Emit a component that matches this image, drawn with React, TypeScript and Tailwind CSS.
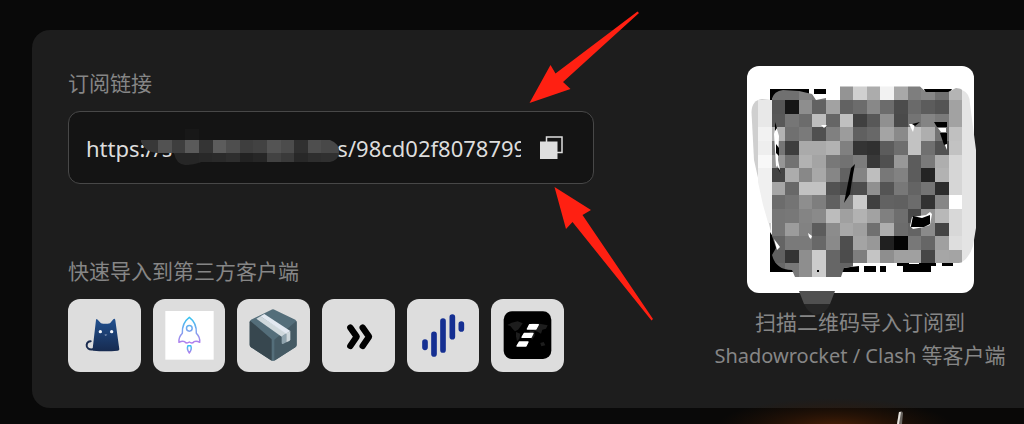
import type { ReactNode } from "react";

const LATIN_CJK =
  "font-['Noto_Sans','Noto_Sans_CJK_SC',sans-serif]";

const SUBSCRIPTION_URL = "https://s" + "\u2002".repeat(15) + "s/98cd02f8078799";

/* Grey levels of the pixelated code, one list per row. */
const CELL = 13.62;
const CODE_ROWS: number[][] = [
  [255, 112, 112, 128, 118, 255, 148, 208, 172, 242, 168, 126, 134, 112, 180],
  [232, 86, 22, 142, 98, 162, 98, 108, 136, 108, 76, 106, 92, 84, 162],
  [232, 88, 118, 108, 190, 102, 192, 64, 88, 144, 74, 116, 132, 122, 162],
  [242, 178, 112, 122, 80, 128, 156, 96, 104, 164, 138, 194, 174, 116, 192],
  [238, 118, 62, 170, 170, 178, 128, 52, 48, 92, 110, 194, 112, 82, 194],
  [248, 150, 114, 178, 164, 120, 114, 124, 56, 80, 152, 92, 122, 174, 214],
  [240, 68, 172, 136, 168, 134, 98, 132, 190, 120, 130, 92, 36, 178, 214],
  [240, 166, 104, 194, 194, 82, 72, 76, 144, 84, 120, 100, 116, 44, 214],
  [240, 108, 116, 142, 126, 96, 128, 202, 64, 98, 96, 108, 50, 134, 255],
  [240, 118, 120, 132, 138, 188, 160, 178, 162, 128, 110, 72, 148, 184, 216],
  [255, 118, 156, 130, 92, 140, 168, 160, 112, 174, 108, 100, 138, 68, 216],
  [255, 100, 122, 122, 104, 138, 78, 164, 152, 32, 4, 120, 102, 160, 222],
  [255, 96, 52, 142, 204, 102, 76, 126, 196, 142, 160, 160, 70, 166, 164],
  [255, 104, 120, 142, 204, 102, 100, 255, 255, 255, 255, 255, 255, 255, 255],
];

const URL_MASK_TOP = [56, 82, 62, 90, 52, 92, 78, 62, 66, 84, 76, 48, 78, 72];
const URL_MASK_BOTTOM = [38, 38, 40, 42, 46, 34, 38, 66, 58, 40, 46, 48];

function grey(level: number) {
  return `rgb(${level},${level},${level})`;
}

function CatIcon() {
  return (
    <svg viewBox="0 0 218 218" className="size-full" aria-hidden="true">
      <defs>
        <linearGradient id="cat" x1="0" y1="0" x2="0" y2="1">
          <stop offset="0" stopColor="#21508f" />
          <stop offset="1" stopColor="#172b50" />
        </linearGradient>
      </defs>
      <path d="M78 150C62 155 55 145 56 138C57 131 62 127 68 127" fill="none" stroke="#1a2c50" strokeWidth="6" strokeLinecap="round" />
      <path d="M84 63Q85 58 89 62L99 73Q112 76 126 73L136 61Q141 57 142 64L154 151Q154 155 149 155Q112 158 76 155Q73 154 74 149Z" fill="url(#cat)" />
      <circle cx="97" cy="98" r="5" fill="#f2f5fa" />
      <circle cx="131" cy="98" r="5" fill="#f2f5fa" />
      <path d="M109 107Q113 105 118 107L113 111Z" fill="#8093b4" />
    </svg>
  );
}

function RocketIcon() {
  return (
    <svg viewBox="0 0 218 218" className="size-full" aria-hidden="true">
      <defs>
        <linearGradient id="rocket" gradientUnits="userSpaceOnUse" x1="0" y1="54" x2="0" y2="134">
          <stop offset="0" stopColor="#35c5f0" />
          <stop offset="0.5" stopColor="#7aa5ee" />
          <stop offset="1" stopColor="#b57ced" />
        </linearGradient>
        <linearGradient id="flame" x1="0" y1="0" x2="0" y2="1">
          <stop offset="0" stopColor="#35c5f0" />
          <stop offset="1" stopColor="#b57ced" />
        </linearGradient>
      </defs>
      <rect x="37" y="36" width="145" height="146" fill="#fff" />
      <g fill="none" strokeWidth="4.5" strokeLinejoin="round">
        <path stroke="url(#rocket)" d="M109 55C94 66 87 83 88 103C80 111 77 121 78 130Q88 125 95 128Q101 135 109 129Q117 135 123 128Q131 125 140 130C141 121 138 111 130 103C131 83 124 66 109 55Z" />
        <circle stroke="url(#rocket)" cx="109" cy="88" r="8.5" />
        <path stroke="url(#flame)" d="M105 140H113Q118 150 109 162Q100 150 105 140Z" />
      </g>
    </svg>
  );
}

function BoxIcon() {
  return (
    <svg viewBox="0 0 218 218" className="size-full" aria-hidden="true">
      <path d="M102 33Q108 29 114 33L175 62Q179 65 179 70V137Q179 142 175 145L114 184Q108 188 102 184L42 145Q38 142 38 137V70Q38 65 42 62Z" fill="#546e7a" />
      <path d="M39 65L104 121V185L42 145Q38 142 38 137V70Z" fill="#37474f" />
      <path d="M112 122L178 66Q179 68 179 71V137Q179 142 175 145L112 185Z" fill="#455a64" />
      <path d="M58 59L70 52L150 103L134 113Z" fill="#cfd8dc" />
      <path d="M70 52L82 45L160 96L148 104Z" fill="#e3e9f1" />
      <path d="M134 112L148 103V130L138 135Q134 136 134 132Z" fill="#90a4ae" />
      <path d="M148 103L160 96V121Q160 124 157 126L148 130Z" fill="#cfd8dc" />
    </svg>
  );
}

function ChevronsIcon() {
  return (
    <svg viewBox="0 0 218 218" className="size-full" aria-hidden="true">
      <g fill="none" stroke="#000" strokeWidth="19" strokeLinecap="round" strokeLinejoin="round">
        <path d="M85 86L104 113L85 141" />
        <path d="M122 86L141 113L122 141" />
      </g>
    </svg>
  );
}

function BarsIcon() {
  return (
    <svg viewBox="0 0 218 218" className="size-full" aria-hidden="true">
      <g stroke="#152f92" strokeWidth="17" strokeLinecap="round">
        <path d="M54 129V145M81 106V165M108 66V153M136 54V113M163 75V90" />
      </g>
    </svg>
  );
}

function StripesIcon() {
  return (
    <svg viewBox="0 0 218 218" className="size-full" aria-hidden="true">
      <rect x="38" y="37" width="143" height="143" rx="25" fill="#000" />
      <g fill="#1d1d1d">
        <path d="M49 78L62 71L80 67L95 73L88 83L81 92L72 97L66 91L58 81Z" />
        <path d="M75 99L88 104L85 119L78 127L75 112Z" />
        <path d="M111 78L125 72L146 74L170 79L165 89L154 92L150 104L140 98L130 95L115 90Z" />
        <path d="M116 94L130 96L131 110L123 122L116 107Z" />
        <path d="M148 132L158 129L163 139L151 142Z" />
      </g>
      <g fill="#fff" stroke="#fff" strokeWidth="4" strokeLinejoin="round">
        <path d="M116 77H142L135 90H109Z" />
        <path d="M100 103H126L120 115H93Z" />
        <path d="M85 129H111L105 141H78Z" />
      </g>
    </svg>
  );
}

const CLIENTS: { name: string; icon: ReactNode }[] = [
  { name: "Clash", icon: <CatIcon /> },
  { name: "Shadowrocket", icon: <RocketIcon /> },
  { name: "Box", icon: <BoxIcon /> },
  { name: "Chevrons", icon: <ChevronsIcon /> },
  { name: "Bars", icon: <BarsIcon /> },
  { name: "Stripes", icon: <StripesIcon /> },
];

function UrlMask() {
  return (
    <svg
      viewBox="140 128 202 40"
      className="pointer-events-none absolute left-[70px] top-[15px] h-[40px] w-[202px]"
      aria-hidden="true"
    >
      <defs>
        <clipPath id="url-mask">
          <path d="M142 141H331Q340 144 340 153Q340 161 331 163H202Q195 166 186 166Q177 165 175 154H158Q146 153 142 143Z" />
        </clipPath>
      </defs>
      <rect x="186" y="130" width="14" height="11" fill="#181818" />
      <g clipPath="url(#url-mask)" shapeRendering="crispEdges">
        {URL_MASK_TOP.map((level, i) => (
          <rect key={i} x={145.4 + i * CELL - (i === 0 ? 4 : 0)} y="141" width={CELL + 4} height="14" fill={grey(level)} />
        ))}
        {URL_MASK_BOTTOM.map((level, i) => (
          <rect key={i} x={172.6 + i * CELL} y="154.3" width={CELL + 4} height="14" fill={grey(level)} />
        ))}
      </g>
    </svg>
  );
}

function QrCode() {
  return (
    <div className="size-[227px] rounded-xl bg-white">
      <svg
        viewBox="747 66 227 227"
        className="relative size-full overflow-visible"
        role="img"
        aria-label="QR"
      >
        <defs>
          <clipPath id="code">
            <path d="M758 100L771.7 99Q774 91 783 90L799 91L812 94L816 100L826 98L839.6 86.4H920L926 92H948L956 88Q965 88 969 99L975 150L975 226L974 250Q972 262 955 263.7L930 264L856 266L844 268L841 277H795L792 270Q776 270 772 255L776 248L771.7 235L763 205L758 182Z" />
          </clipPath>
        </defs>
        <path d="M751.500 112Q752 100 762 99L771 100V232L763 200L754 160Z" fill="#cfcfcf" />
        <path d="M962 90Q970 93 970 104L976 150V228L973 246Q969 258 962 262Z" fill="#e4e4e4" />
        <g fill="#000">
          <path d="M770 89H809V100H770Z" />
          <path d="M814 89H826V94H814Z" />
          <path d="M924 89H952L949 94H926Z" />
          <path d="M770 232L780 248L775 262L794 268V272H770Z" />
          <path d="M842 268L859 266V272H840Z" />
          <path d="M864 266H876V272H864Z" />
          <path d="M880 266H886V272H880Z" />
          <path d="M903 264H931V272H903Z" />
          <path d="M897 262H909V266H897Z" />
          <path d="M919 263H936V266H919Z" />
          <path d="M942 262H953V266H942Z" />
        </g>
        <g clipPath="url(#code)" shapeRendering="crispEdges">
          {CODE_ROWS.map((row, y) =>
            row.map((level, x) =>
              level === 255 && (y === 13 || x === 0 || y === 0) ? null : (
                <rect
                  key={`${y}-${x}`}
                  x={757.9 + x * CELL}
                  y={86.4 + y * CELL}
                  width={CELL}
                  height={CELL}
                  fill={grey(level)}
                />
              ),
            )
          )}
        </g>
        <g fill="#fff">
          <path d="M776 126L779 136L778 160L780 170L776 166L774 134Z" />
          <path d="M821 125H827L824 128Z" />
          <path d="M909 124H915L913 132Z" />
          <path d="M938 128H946V132H941Z" />
          <path d="M944 143H947V150Z" />
          <path d="M808 233L812 236L811 239L809 237Z" />
          <path d="M774 239L780 247L777 250Z" />
          <path d="M910 226L912 217L926 215L930 212L932 214L930 225L924 227L913 229Z" />
        </g>
        <g fill="#000">
          <path d="M775 122L777 128L775 131Z" />
          <path d="M776 144L779 148V156L776 153Z" />
          <path d="M777 165L781 174L778 169Z" />
          <path d="M851 168L855 164L852 180L850 194L844 203L848 183Z" />
          <path d="M912 124L920 122L915 126Z" />
          <path d="M934 122H947V127H937Z" />
          <path d="M940 133H947V144L944 145Z" />
          <path d="M911 226L913 216L922 218L930 215V224L924 227L911 227Z" />
          <path d="M817 270H819V272H817Z" />
        </g>
        <path d="M799 291H835L830 304H804Z" fill="#505050" />
        <path d="M804 304H830Q826 314 816 315Q808 313 804 304Z" fill="#272727" />
      </svg>
    </div>
  );
}

function Arrows() {
  return (
    <svg
      viewBox="520 0 140 330"
      className="pointer-events-none absolute left-[520px] top-0 h-[330px] w-[140px]"
      aria-hidden="true"
    >
      <g fill="#ff2012">
        <path d="M529.500 103L550.500 65L555.500 73.500L637.500 11.500L639 13L563 82L570.500 89Z" />
        <path d="M554.500 187L591 210L582.500 215L653 319L651.500 320.500L572.500 222L566 229Z" />
      </g>
    </svg>
  );
}

function Glow() {
  return (
    <svg
      viewBox="700 384 324 40"
      className="pointer-events-none absolute left-[700px] top-[384px] h-[40px] w-[324px]"
      aria-hidden="true"
    >
      <defs>
        <radialGradient id="glow">
          <stop offset="0" stopColor="#5a2505" stopOpacity="0.85" />
          <stop offset="0.5" stopColor="#3a1a05" stopOpacity="0.5" />
          <stop offset="1" stopColor="#2a1505" stopOpacity="0" />
        </radialGradient>
      </defs>
      <rect x="700" y="408" width="324" height="16" fill="#090807" />
      <ellipse cx="835" cy="428" rx="120" ry="30" fill="url(#glow)" />
      <path d="M899 412Q902 410 903 413L902 424H897Z" fill="#696560" />
      <path d="M899 412L901 412L899 424H897Z" fill="#e5e1db" />
    </svg>
  );
}

export default function App() {
  return (
    <div className={`relative min-h-screen overflow-hidden bg-[#090909] pl-8 pt-[30px] ${LATIN_CJK}`}>
      <main className="flex rounded-l-[18px] bg-[#1d1d1d] pb-9 pl-9 pt-9">
        <section className="w-[526px] shrink-0">
          <label htmlFor="subscription" className="block h-[45px] text-[21px] leading-[34px] text-[#868686]">
            订阅链接
          </label>
          <div className="relative flex h-[73px] items-center rounded-xl border border-[#484848] bg-[#141414] pl-[17px] pr-[30px]">
            <input
              id="subscription"
              readOnly
              value={SUBSCRIPTION_URL}
              className="h-10 min-w-0 flex-1 bg-transparent text-[22px] text-[#dddddd] outline-none"
            />
            <UrlMask />
            <button type="button" aria-label="复制" className="ml-[19px] size-[23px] shrink-0">
              <svg viewBox="0 0 23 23" className="size-full" aria-hidden="true">
                <path d="M6.500 1H22V16.500H6.500Z" fill="none" stroke="#dedede" strokeWidth="1.500" />
                <path d="M0 5.500H17.500V23H0Z" fill="#dedede" />
              </svg>
            </button>
          </div>
          <h2 className="mt-[70px] text-[21px] leading-[34px] text-[#868686]">快速导入到第三方客户端</h2>
          <div className="mt-[11px] grid w-[496px] grid-cols-6 gap-3">
            {CLIENTS.map((client) => (
              <button
                key={client.name}
                type="button"
                aria-label={client.name}
                className="aspect-square overflow-hidden rounded-xl bg-[#dddddd]"
              >
                {client.icon}
              </button>
            ))}
          </div>
        </section>
        <section className="ml-[102px] flex flex-1 flex-col items-center">
          <QrCode />
          <p className="mt-[13px] whitespace-nowrap text-center text-[21px] leading-[33px] text-[#868686]">
            扫描二维码导入订阅到
            <br />
            <span className="text-[20px]">Shadowrocket / Clash </span>等客户端
          </p>
        </section>
      </main>
      <Glow />
      <Arrows />
    </div>
  );
}
